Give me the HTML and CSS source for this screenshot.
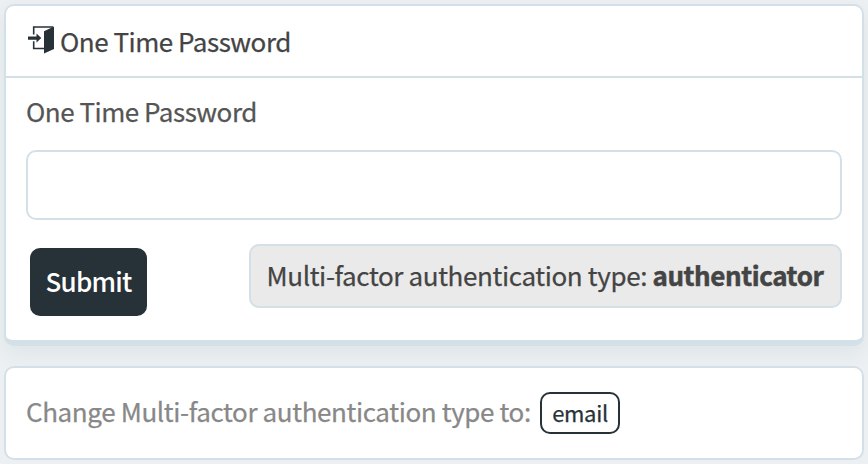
FILE: index.html
```html
<!DOCTYPE html>
<html lang="en">
<head>
<meta charset="utf-8">
<title>One Time Password</title>
<link rel="stylesheet" href="styles.css">
</head>
<body>
<main class="page">
  <form class="card card-main">
    <header class="card-header">
      <svg class="icon" width="28" height="30" viewBox="0 0 28 30" aria-hidden="true">
        <path class="frame" d="M6.7 11.5V4H26M6.7 18.3V25.5H17"/>
        <path class="solid" d="M17 8.2L27 3.5V26L17 30.4ZM1 13.5H9.5V10.5L14.3 15.1L9.5 19.6V16.7H1Z"/>
      </svg>
      <h1 class="title">One Time Password</h1>
    </header>
    <div class="card-body">
      <label class="label" for="otp">One Time Password</label>
      <input class="field" id="otp" type="text">
      <div class="actions">
        <button class="submit" type="button">Submit</button>
        <div class="type"><span>Multi-factor authentication type: </span><strong>authenticator</strong></div>
      </div>
    </div>
  </form>
  <section class="card card-change">
    <span class="change-text">Change Multi-factor authentication type to:</span>
    <button class="email" type="button">email</button>
  </section>
</main>
</body>
</html>
```
FILE: styles.css
```css
* { box-sizing: border-box; }
body {
  margin: 0;
  height: 464px;
  overflow: hidden;
  background: #ecf0f3;
  color: #444;
  font: 26px/36px "Noto Sans CJK SC", "Noto Sans", sans-serif;
  letter-spacing: -.48px;
  white-space: nowrap;
  -webkit-text-stroke: .25px currentColor;
}
.page { padding: 4px; }
.card {
  background: #fff;
  border: 2px solid #d3e0e8;
  border-radius: 10px;
}
.card-main {
  height: 342px;
  border-bottom-width: 6px;
  box-shadow: 0 8px 20px rgba(50, 80, 90, .07);
}
.card-header {
  display: flex;
  height: 72px;
  padding: 17px 20px 0 21px;
  border-bottom: 2px solid #d3e0e8;
}
.icon { flex: none; margin-right: 5px; overflow: visible; }
.frame { fill: none; stroke: #263238; stroke-width: 1.6; }
.solid { fill: #263238; }
.title { margin: 0; font-size: 26px; font-weight: 400; }
.card-body { padding: 15px 20px 0; }
.label { display: block; color: #555; }
.field {
  display: block;
  width: 100%;
  height: 70px;
  margin-top: 21px;
  border: 2px solid #d3e0e8;
  border-radius: 10px;
  background: #fff;
}
.actions {
  display: flex;
  justify-content: space-between;
  align-items: flex-start;
  padding: 24px 0 0 4px;
}
.submit {
  width: 117px;
  height: 68px;
  margin-top: 4px;
  padding: 0 0 2px;
  border: 0;
  border-radius: 10px;
  background: #263238;
  color: #fff;
  font: 500 26px/36px "Noto Sans CJK SC", "Noto Sans", sans-serif;
  letter-spacing: -.8px;
  -webkit-text-stroke: 0;
}
.type {
  width: 593px;
  height: 64px;
  padding: 11px 0 0 15.5px;
  border: 2px solid #d3e0e8;
  border-radius: 10px;
  background: #eaeaea;
  letter-spacing: -.37px;
  white-space: pre;
}
.type strong {
  font-weight: 700;
  letter-spacing: -.43px;
  -webkit-text-stroke: .5px currentColor;
}
.card-change {
  display: flex;
  height: 94px;
  margin-top: 20px;
  padding: 24px 20px 0;
  color: #888;
}
.change-text { width: 514px; padding-top: 1px; letter-spacing: -.38px; }
.email {
  width: 80px;
  height: 42px;
  padding: 0 0 2px;
  border: 2px solid #263238;
  border-radius: 10px;
  background: #fff;
  color: #263238;
  font: 22px/36px "Noto Sans CJK SC", "Noto Sans", sans-serif;
  letter-spacing: -.3px;
}
```
